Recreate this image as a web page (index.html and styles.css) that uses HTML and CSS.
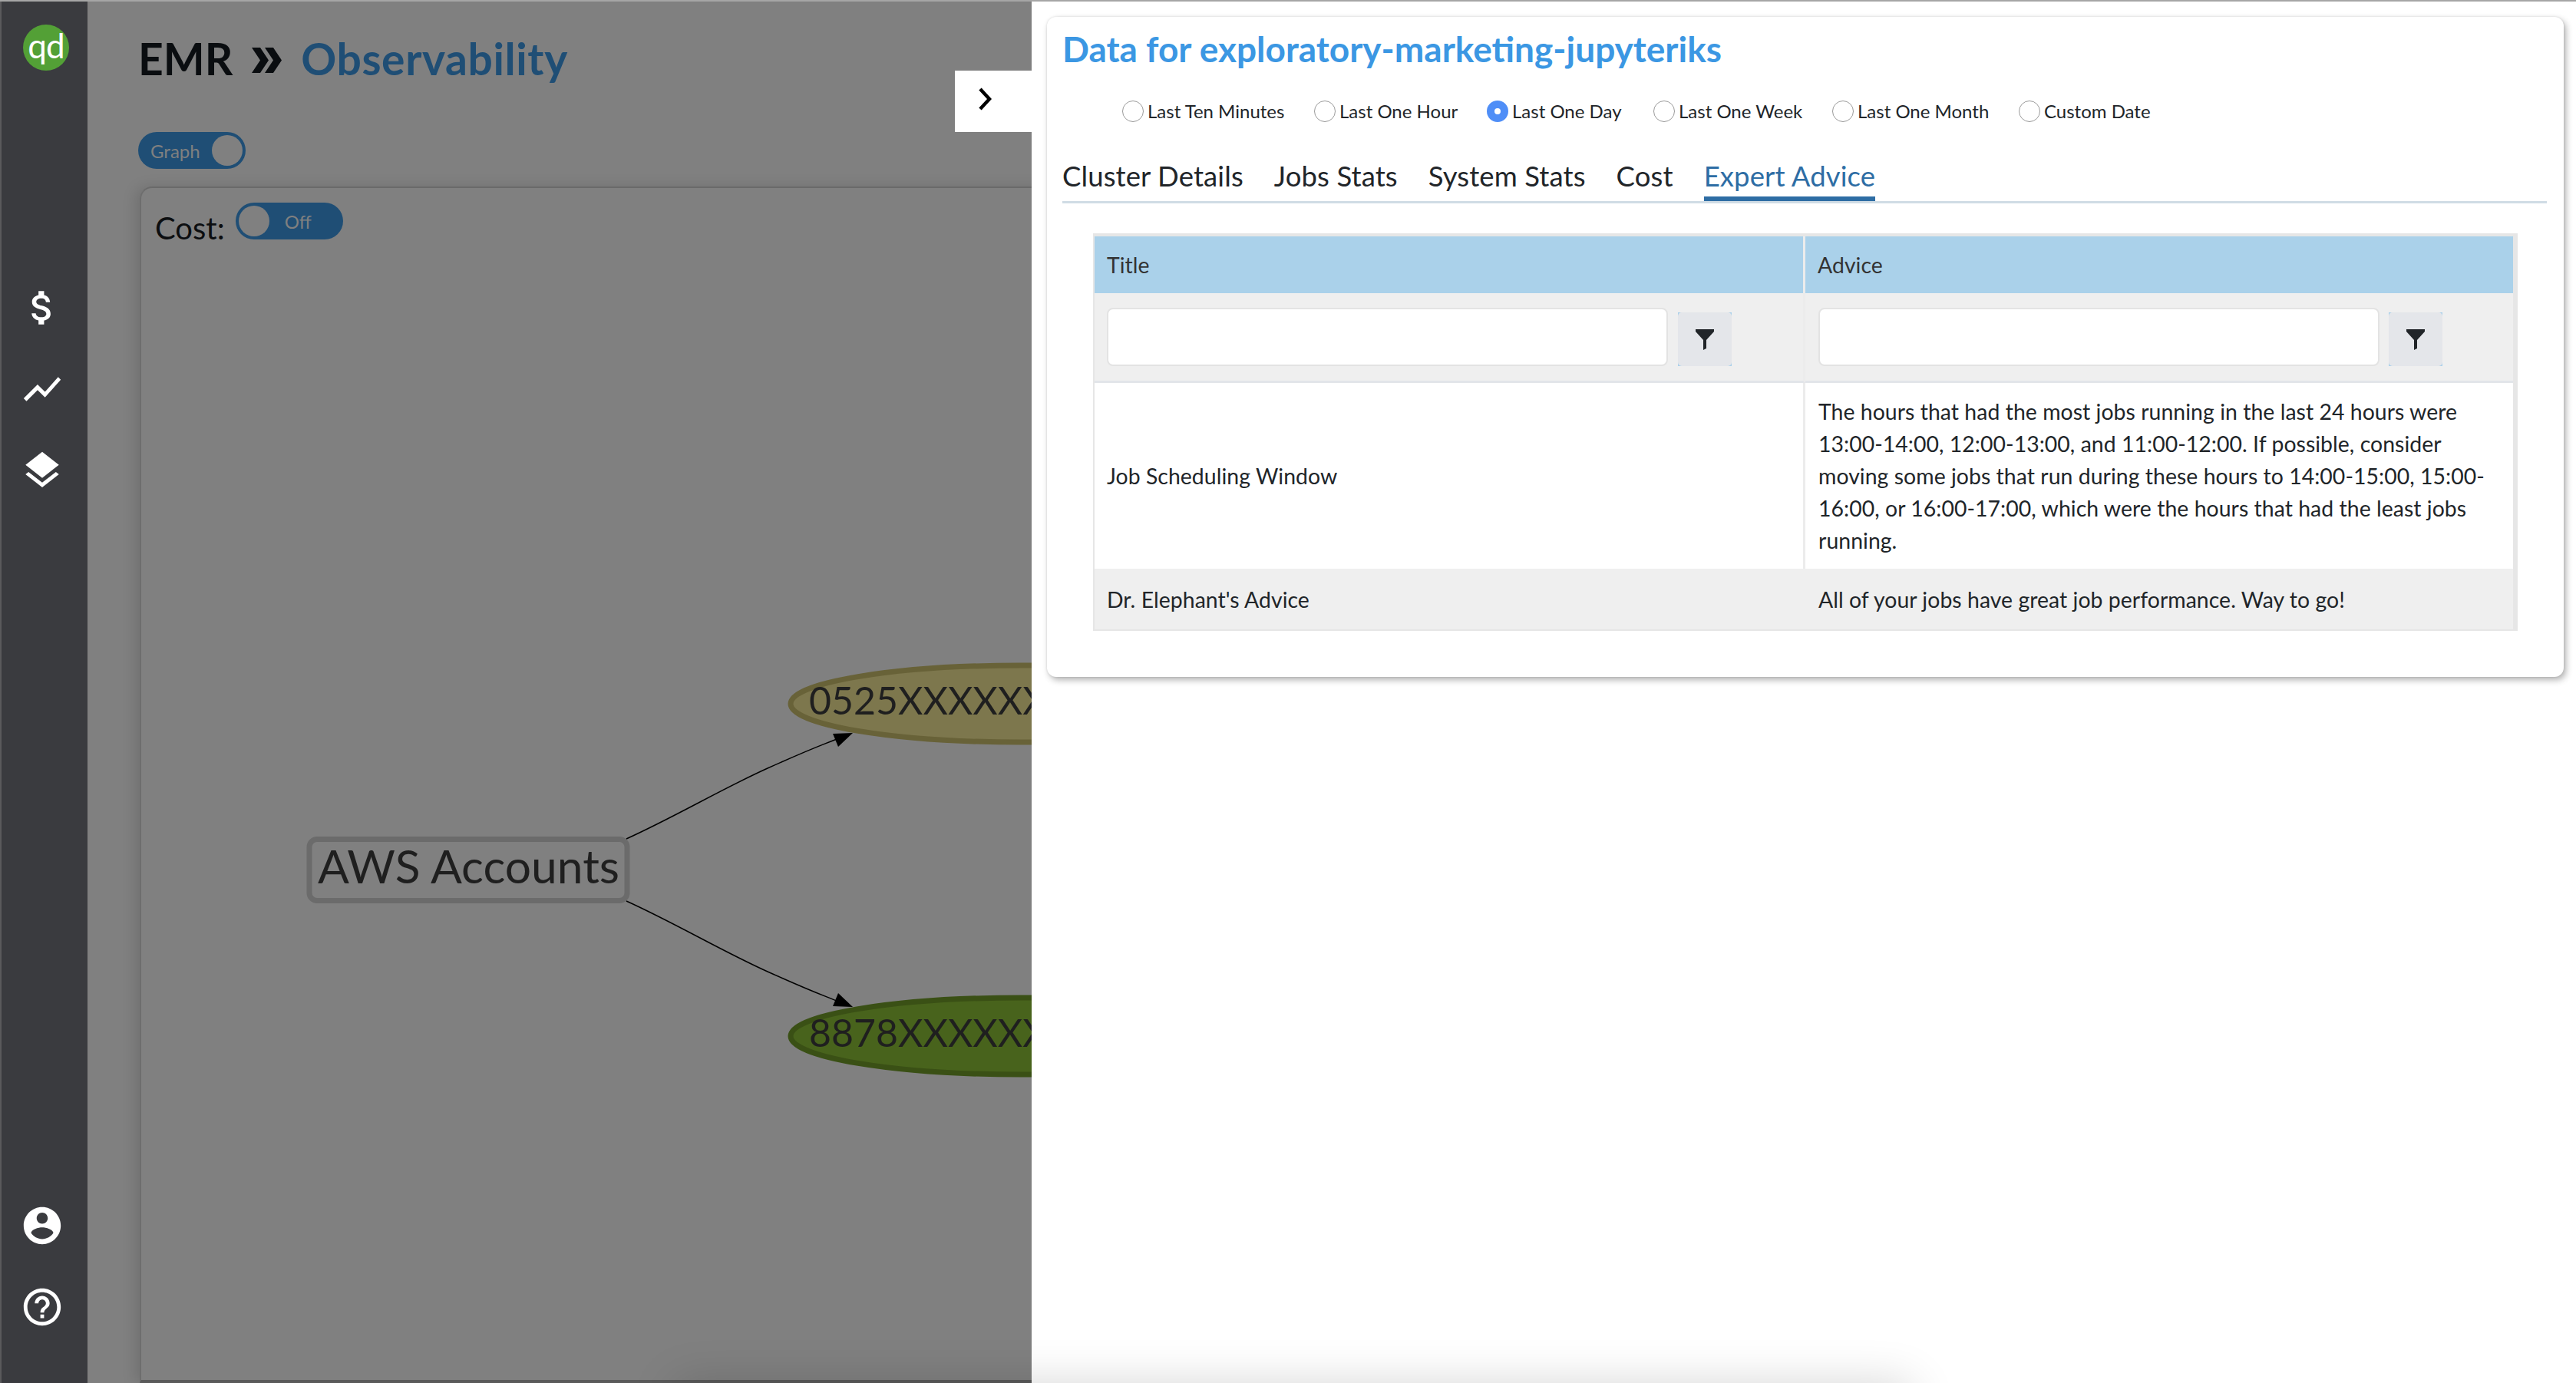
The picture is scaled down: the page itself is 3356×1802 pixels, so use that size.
FILE: index.html
```html
<!DOCTYPE html>
<html lang="en">
<head>
    <meta charset="UTF-8">
    <meta name="viewport" content="width=device-width, initial-scale=1.0">
    <title>EMR Observability</title>
    <link rel="stylesheet" href="styles.css">
</head>
<body>
<div class="app">
    <nav class="sidebar">
        <div class="logo">qd</div>
        <div class="nav-top">
            <a class="nav-icon"><svg viewBox="0 0 24 24"><path d="M11.8 10.9c-2.27-.59-3-1.2-3-2.15 0-1.09 1.01-1.85 2.7-1.85 1.78 0 2.44.85 2.5 2.1h2.21c-.07-1.72-1.12-3.3-3.21-3.81V3h-3v2.16c-1.94.42-3.5 1.68-3.5 3.61 0 2.31 1.91 3.46 4.7 4.13 2.5.6 3 1.48 3 2.41 0 .69-.49 1.79-2.7 1.79-2.06 0-2.87-.92-2.98-2.1h-2.2c.12 2.19 1.76 3.42 3.68 3.83V21h3v-2.15c1.95-.37 3.5-1.5 3.5-3.55 0-2.84-2.43-3.81-4.7-4.4z"/></svg></a>
            <a class="nav-icon"><svg viewBox="0 0 24 24"><path d="M3.5 18.49l6-6.01 4 4L22 6.92l-1.41-1.41-7.09 7.97-4-4L2 16.99z"/></svg></a>
            <a class="nav-icon"><svg viewBox="0 0 24 24"><path d="M11.99 18.54l-7.37-5.73L3 14.07l9 7 9-7-1.63-1.27-7.38 5.74zM12 16l7.36-5.73L21 9l-9-7-9 7 1.63 1.27L12 16z"/></svg></a>
        </div>
        <div class="nav-bottom">
            <a class="nav-icon"><svg viewBox="0 0 24 24"><path d="M12 2C6.48 2 2 6.48 2 12s4.48 10 10 10 10-4.48 10-10S17.52 2 12 2zm0 3c1.66 0 3 1.34 3 3s-1.34 3-3 3-3-1.34-3-3 1.34-3 3-3zm0 14.2c-2.5 0-4.71-1.28-6-3.22.03-1.99 4-3.08 6-3.08 1.99 0 5.97 1.09 6 3.08-1.29 1.94-3.5 3.22-6 3.22z"/></svg></a>
            <a class="nav-icon"><svg viewBox="0 0 24 24"><path d="M11 18h2v-2h-2v2zm1-16C6.48 2 2 6.48 2 12s4.48 10 10 10 10-4.48 10-10S17.52 2 12 2zm0 18c-4.41 0-8-3.59-8-8s3.59-8 8-8 8 3.59 8 8-3.59 8-8 8zm0-14c-2.21 0-4 1.79-4 4h2c0-1.1.9-2 2-2s2 .9 2 2c0 2-3 1.75-3 5h2c0-2.25 3-2.5 3-5 0-2.21-1.79-4-4-4z"/></svg></a>
        </div>
    </nav>

    <main class="main">
        <h1 class="page-title">
            <span>EMR</span>
            <svg class="crumb-sep" viewBox="0 0 40 33"><path d="M0 0h11l11 16.5L11 33H0l11-16.5zM17 0h11l11 16.5L28 33H17l11-16.5z"/></svg>
            <span class="page-title-current">Observability</span>
        </h1>

        <div class="toggle toggle-on">
            <span class="toggle-text">Graph</span>
            <span class="toggle-knob"></span>
        </div>

        <section class="graph-card">
            <div class="cost-row">
                <span class="cost-label">Cost:</span>
                <div class="toggle toggle-off">
                    <span class="toggle-knob"></span>
                    <span class="toggle-text">Off</span>
                </div>
            </div>

            <!-- viewBox uses page coordinates so the nodes read the same as the screen -->
            <svg class="graph" viewBox="182 243 1400 1555">
                <path class="edge" d="M816 1093 C 880 1064 940 1028 1000 1001 S 1060 975 1095 961"/>
                <path class="edge" d="M816 1174 C 880 1203 940 1239 1000 1266 S 1060 1292 1095 1306"/>
                <rect class="node-root" x="403" y="1093.5" width="414" height="80" rx="10"/>
                <text class="node-text" x="414" y="1151">AWS Accounts</text>
                <ellipse class="node-olive" cx="1330" cy="917" rx="300" ry="50"/>
                <ellipse class="node-green" cx="1330" cy="1350" rx="300" ry="50"/>
                <polygon class="arrow" points="1111,955 1085,956 1092,973"/>
                <polygon class="arrow" points="1111,1312 1085,1311 1092,1294"/>
                <text class="node-label" x="1054" y="931">0525XXXXXXXX</text>
                <text class="node-label" x="1054" y="1364">8878XXXXXXXX</text>
            </svg>
        </section>

        <button class="collapse-btn"><svg viewBox="0 0 18 30"><path d="M3 2l12 13L3 28"/></svg></button>
    </main>

    <aside class="panel">
        <div class="panel-card">
            <h2 class="panel-title">Data for exploratory-marketing-jupyteriks</h2>

            <div class="range-row">
                <label class="range-item"><input type="radio" name="range"> Last Ten Minutes</label>
                <label class="range-item"><input type="radio" name="range"> Last One Hour</label>
                <label class="range-item"><input type="radio" name="range" checked> Last One Day</label>
                <label class="range-item"><input type="radio" name="range"> Last One Week</label>
                <label class="range-item"><input type="radio" name="range"> Last One Month</label>
                <label class="range-item"><input type="radio" name="range"> Custom Date</label>
            </div>

            <div class="tabs">
                <a class="tab">Cluster Details</a>
                <a class="tab">Jobs Stats</a>
                <a class="tab">System Stats</a>
                <a class="tab">Cost</a>
                <a class="tab tab-active">Expert Advice</a>
            </div>

            <table class="advice-table">
                <thead>
                    <tr class="head-row">
                        <th class="col-title">Title</th>
                        <th>Advice</th>
                    </tr>
                    <tr class="filter-row">
                        <td class="col-title">
                            <div class="filter filter-title">
                                <input type="text">
                                <button class="filter-btn"><svg viewBox="0 0 24 27"><path d="M0 0h24v3L14 14v11l-4 2V14L0 3z"/></svg></button>
                            </div>
                        </td>
                        <td>
                            <div class="filter filter-advice">
                                <input type="text">
                                <button class="filter-btn"><svg viewBox="0 0 24 27"><path d="M0 0h24v3L14 14v11l-4 2V14L0 3z"/></svg></button>
                            </div>
                        </td>
                    </tr>
                </thead>
                <tbody>
                    <tr>
                        <td class="col-title">Job Scheduling Window</td>
                        <td>The hours that had the most jobs running in the last 24 hours were<br>13:00-14:00, 12:00-13:00, and 11:00-12:00. If possible, consider<br>moving some jobs that run during these hours to 14:00-15:00, 15:00-<br>16:00, or 16:00-17:00, which were the hours that had the least jobs<br>running.</td>
                    </tr>
                    <tr class="row-alt">
                        <td class="col-title">Dr. Elephant's Advice</td>
                        <td>All of your jobs have great job performance. Way to go!</td>
                    </tr>
                </tbody>
            </table>
        </div>
    </aside>

    <div class="offscreen-shadow"></div>
</div>
</body>
</html>
```

FILE: styles.css
```css
* {
    box-sizing: border-box;
}
html, body {
    margin: 0;
    height: 100%;
}
body {
    font-family: "Lato", "Liberation Sans", sans-serif;
    color: #212529;
}
.app {
    position: relative;
    display: flex;
    height: 1802px;
    overflow: hidden;
    border-top: 2px solid #a6a6a6;
    background: #fff;
}

/* sidebar */
.sidebar {
    display: flex;
    flex-direction: column;
    width: 114px;
    flex-shrink: 0;
    padding-bottom: 46px;
    background: #3a3b3f;
    border-left: 2px solid #5a5a5c;
}
.logo {
    width: 60px;
    height: 60px;
    margin: 30px 0 0 28px;
    border-radius: 50%;
    background: #53a036;
    color: #fff;
    font-size: 44px;
    line-height: 54px;
    letter-spacing: -1px;
    text-align: center;
}
.nav-top {
    margin-top: 256px;
}
.nav-bottom {
    margin-top: auto;
}
.nav-icon {
    display: flex;
    align-items: center;
    justify-content: center;
    height: 106px;
    padding-right: 6px;
}
.nav-icon svg {
    width: 58px;
    height: 58px;
    fill: #fff;
}

/* left side, dimmed by the open panel */
.main {
    position: relative;
    display: flex;
    flex-direction: column;
    width: 1230px;
    flex-shrink: 0;
    overflow: hidden;
    padding-left: 68px;
    background: #808080;
}
.page-title {
    display: flex;
    align-items: center;
    flex-shrink: 0;
    height: 68px;
    margin: 40px 0 2px -2px;
    color: #0a0d10;
    font-size: 57px;
    font-weight: 700;
    white-space: nowrap;
}
.crumb-sep {
    width: 40px;
    height: 33px;
    margin: 4px 24px 0 25px;
    fill: #0a0d10;
}
.page-title-current {
    color: #1f4e75;
    letter-spacing: 0.6px;
}
.toggle {
    display: flex;
    align-items: center;
    flex-shrink: 0;
    width: 140px;
    height: 48px;
    padding: 0 4px;
    border-radius: 24px;
    background: #1f4e75;
    font-size: 24px;
    color: #808080;
}
.toggle-knob {
    width: 40px;
    height: 40px;
    border-radius: 50%;
    background: #808080;
}
.toggle-on {
    justify-content: space-between;
    margin: 60px 0 0 -2px;
    padding-left: 16px;
}
.toggle-off .toggle-text {
    margin-left: 20px;
}
.graph-card {
    position: relative;
    flex: 1;
    width: 1400px;
    margin-top: 23px;
    border-top: 2px solid #6a6a6a;
    border-left: 2px solid #6e6e6e;
    border-bottom: 4px solid #5a5a5a;
    border-radius: 16px 0 0 0;
    box-shadow: -6px 0 18px rgba(0, 0, 0, 0.12);
}
.cost-row {
    display: flex;
    align-items: flex-start;
    gap: 14px;
    padding: 19px 0 0 18px;
}
.cost-label {
    margin-top: 9px;
    font-size: 40px;
    line-height: 48px;
    color: #0c0e10;
}
.graph {
    position: absolute;
    left: -2px;
    top: -2px;
    width: 1400px;
    height: 1555px;
}
.edge {
    fill: none;
    stroke: #000;
    stroke-width: 1.5;
}
.arrow {
    fill: #000;
}
.node-root {
    fill: #808080;
    stroke: #6b6b6b;
    stroke-width: 7;
}
.node-text {
    font-size: 60.5px;
    fill: #1f1f1f;
}
.node-label {
    font-size: 50px;
    fill: #1f1f1f;
}
.node-olive {
    fill: #7d774d;
    stroke: #686238;
    stroke-width: 7;
}
.node-green {
    fill: #48631c;
    stroke: #3a5015;
    stroke-width: 7;
}
.collapse-btn {
    position: absolute;
    top: 90px;
    right: 0;
    width: 100px;
    height: 80px;
    padding: 0 0 4px 30px;
    border: 0;
    background: #fff;
    text-align: left;
}
.collapse-btn svg {
    width: 18px;
    height: 30px;
    fill: none;
    stroke: #000;
    stroke-width: 4.5;
}

/* right panel */
.panel {
    flex: 1;
    padding: 20px 16px 0 20px;
    background: #fff;
}
.panel-card {
    padding: 16px 22px 60px 20px;
    border-radius: 12px;
    background: #fff;
    box-shadow: 3px 4px 8px rgba(0, 0, 0, 0.3), 0 0 3px rgba(0, 0, 0, 0.12);
}
.panel-title {
    margin: 0;
    color: #3b97e3;
    font-size: 46px;
    font-weight: 700;
    line-height: 52px;
}
.range-row {
    display: grid;
    grid-template-columns: 250px 225px 217px 233px 243px auto;
    margin: 40px 0 0 78px;
    height: 28px;
}
.range-item {
    display: flex;
    align-items: center;
    gap: 5px;
    font-size: 24px;
    white-space: nowrap;
    color: #212529;
}
.range-item input {
    appearance: none;
    width: 28px;
    height: 28px;
    margin: 0;
    border: 1px solid #9a9a9a;
    border-radius: 50%;
    background: #fff;
}
.range-item input:checked {
    border: 10px solid #4f8ef7;
}
.tabs {
    display: flex;
    gap: 40px;
    height: 68px;
    margin-top: 39px;
    border-bottom: 3px solid #d0dce5;
}
.tab {
    height: 65px;
    padding-top: 6px;
    font-size: 36.5px;
    line-height: 52px;
    letter-spacing: 0.1px;
    white-space: nowrap;
}
.tab-active {
    color: #2e6da4;
    border-bottom: 6px solid #2e6da4;
}
.advice-table {
    width: 1856px;
    margin: 39px 0 0 40px;
    table-layout: fixed;
    border-collapse: separate;
    border-spacing: 0;
    border: solid #e6e6e6;
    border-width: 4px 6px 2px 2px;
    font-size: 28.4px;
    line-height: 42px;
    letter-spacing: 0.05px;
}
.advice-table th,
.advice-table td {
    padding: 0 0 0 17px;
    text-align: left;
    font-weight: 400;
    vertical-align: middle;
}
.advice-table th {
    padding-left: 16px;
}
.advice-table .col-title {
    width: 926px;
    padding-left: 16px;
    border-right: 3px solid #ececec;
}
.head-row th {
    height: 74px;
    background: #aad1ea;
    color: #333;
}
.filter-row td {
    height: 117px;
    background: #efefef;
    border-bottom: 3px solid #e2e5e9;
}
.filter {
    display: flex;
    align-items: flex-end;
    gap: 13px;
    height: 76px;
}
.filter input {
    height: 76px;
    border: 2px solid #e3e3e3;
    border-radius: 8px;
    background: #fff;
}
.filter-title input {
    width: 731px;
}
.filter-advice {
    gap: 12px;
}
.filter-advice input {
    width: 731px;
}
.filter-btn {
    position: relative;
    display: flex;
    align-items: center;
    justify-content: center;
    width: 70px;
    height: 70px;
    padding: 0;
    border: 0;
    background: #aad0ea;
}
.filter-btn::before {
    content: "";
    position: absolute;
    inset: 0;
    border-radius: 5px;
    background: #e4e6ea;
}
.filter-btn svg {
    position: relative;
    width: 24px;
    height: 27px;
    fill: #212529;
}
.advice-table tbody td {
    padding-top: 16px;
    padding-bottom: 16px;
}
.row-alt td {
    height: 79px;
    background: #efefef;
}
.row-alt td.col-title {
    border-right-color: #efefef;
}

.offscreen-shadow {
    position: absolute;
    left: 880px;
    top: 1800px;
    width: 1610px;
    height: 100px;
    box-shadow: 0 0 60px rgba(0, 0, 0, 0.16);
}
```
